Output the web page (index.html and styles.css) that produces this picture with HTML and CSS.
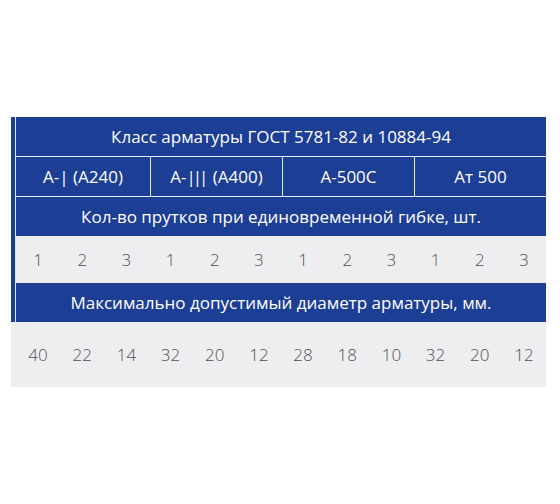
FILE: index.html
```html
<!DOCTYPE html>
<html lang="ru">
<head>
<meta charset="utf-8">
<link rel="stylesheet" href="styles.css">
</head>
<body>
<div class="page">
  <div class="table">
    <div class="top">
      <div class="strip"></div>
      <div class="rows">
        <div class="row head">Класс арматуры ГОСТ 5781-82 и 10884-94</div>
        <div class="row classes">
          <div class="cls">А-<span class="bars">|</span>&nbsp;(А240)</div>
          <div class="cls">А-<span class="bars">|||</span>&nbsp;(А400)</div>
          <div class="cls">А-500С</div>
          <div class="cls">Ат 500</div>
        </div>
        <div class="row head last">Кол-во прутков при единовременной гибке, шт.</div>
        <div class="nums first">
          <span>1</span><span>2</span><span>3</span><span>1</span><span>2</span><span>3</span><span>1</span><span>2</span><span>3</span><span>1</span><span>2</span><span>3</span>
        </div>
        <div class="row head last">Максимально допустимый диаметр арматуры, мм.</div>
      </div>
    </div>
    <div class="nums bottom">
      <span>40</span><span>22</span><span>14</span><span>32</span><span>20</span><span>12</span><span>28</span><span>18</span><span>10</span><span>32</span><span>20</span><span>12</span>
    </div>
  </div>
</div>
</body>
</html>
```

FILE: styles.css
```css
* { box-sizing: border-box; }
html, body { margin: 0; padding: 0; background: #ffffff; }
body { font-family: "Open Sans", "DejaVu Sans", sans-serif; }
.page { padding-top: 117px; padding-left: 11px; }
.table { width: 535px; }
.top { display: flex; }
.strip { width: 5px; background: #1d3e95; border-right: 1px solid #e8ebf4; }
.rows { flex: 1; display: flex; flex-direction: column; }
.row { background: #1d3e95; color: #ffffff; font-size: 17px; }
.head { height: 40px; display: flex; align-items: center; justify-content: center; border-bottom: 1px solid #e8ebf4; }
.head.last { height: 39px; border-bottom: none; }
.classes { display: grid; grid-template-columns: 135px 132px 132px 1fr; height: 40px; border-bottom: 1px solid #e8ebf4; }
.cls { display: flex; align-items: center; justify-content: center; border-right: 1px solid #e8ebf4; }
.cls:last-child { border-right: none; }
.bars { letter-spacing: -3px; padding-right: 3px; }
.nums { display: grid; grid-template-columns: repeat(12, 1fr); background: #eeeef0; color: #505050; font-size: 17px; font-weight: 300; }
.nums span { display: flex; align-items: center; justify-content: center; }
.nums.first { height: 47px; }
.nums.bottom { height: 65px; padding-left: 5px; }
```
